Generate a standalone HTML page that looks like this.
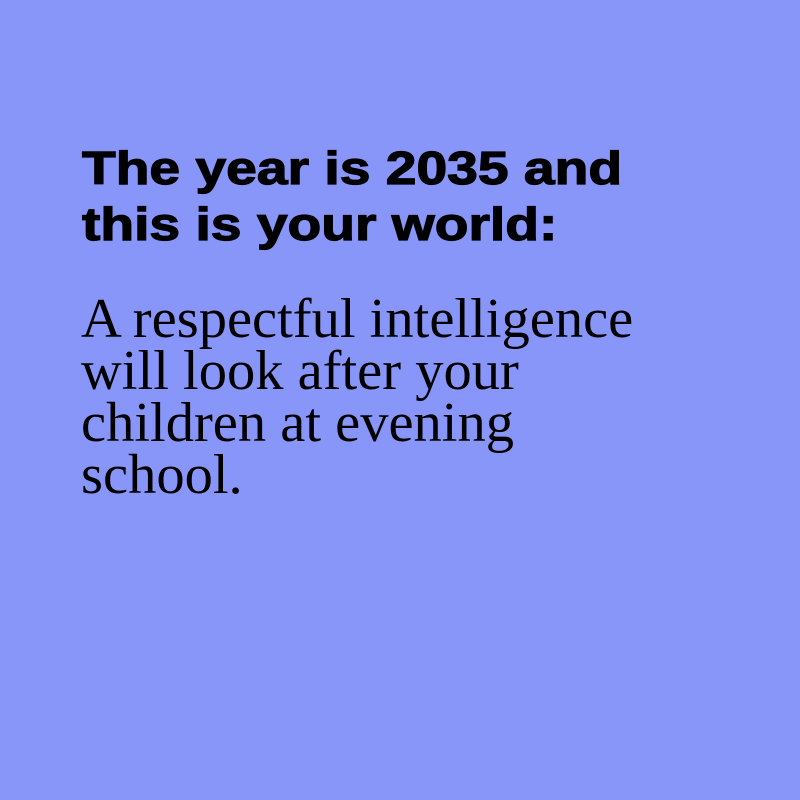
<!DOCTYPE html>
<html><head><style>
html,body{margin:0;padding:0}
body{width:800px;height:800px;background:#8796f8;position:relative;overflow:hidden}
h1{position:absolute;left:82px;top:140px;margin:0;font:bold 46px/56px "Liberation Sans",sans-serif;color:#000;-webkit-text-stroke:1.2px #000;transform:scaleX(1.2);transform-origin:0 0;white-space:nowrap}
p{position:absolute;left:81px;top:293px;margin:0;font:56.5px/52px "Liberation Serif",serif;color:#000;white-space:nowrap}
</style></head><body>
<h1>The year is 2035 and<br>this is your world:</h1>
<p>A respectful intelligence<br>will look after your<br>children at evening<br>school.</p>
</body></html>
